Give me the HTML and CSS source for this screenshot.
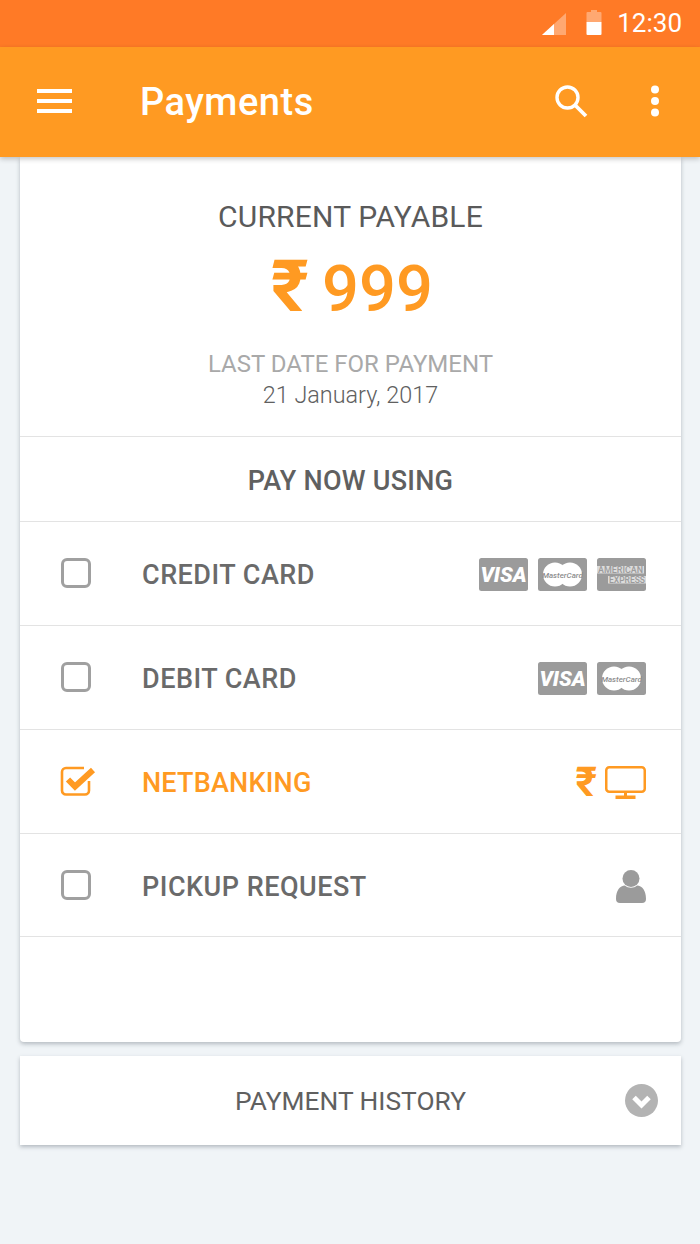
FILE: index.html
```html
<!DOCTYPE html>
<html lang="en">
<head>
<meta charset="utf-8">
<title>Payments</title>
<link rel="stylesheet" href="styles.css">
</head>
<body>
<div class="status">
  <svg class="signal" width="24" height="22" viewBox="0 0 24 22"><path d="M24 0V22H0Z" fill="#fff" fill-opacity=".35"/><path d="M12 11V22H0Z" fill="#fff"/></svg>
  <svg class="battery" width="16" height="25" viewBox="0 0 16 25"><path d="M5 0h6v2h3.500a1 1 0 0 1 1 1v9H.5V3a1 1 0 0 1 1-1H5Z" fill="#fff" fill-opacity=".35"/><path d="M.5 12h15v12a1 1 0 0 1-1 1H1.500a1 1 0 0 1-1-1Z" fill="#fff"/></svg>
  <span class="clock">12:30</span>
</div>
<header class="appbar">
  <svg class="menu" width="35" height="24" viewBox="0 0 35 24"><path d="M0 0h35v4H0ZM0 10h35v4H0ZM0 20h35v4H0Z" fill="#fff"/></svg>
  <h1 class="title">Payments</h1>
  <svg class="search" width="34" height="34" viewBox="0 0 34 34"><circle cx="13.500" cy="13.500" r="10.500" fill="none" stroke="#fff" stroke-width="3.400"/><path d="M21 21 32 32" stroke="#fff" stroke-width="3.800" fill="none"/></svg>
  <svg class="more" width="10" height="32" viewBox="0 0 10 32"><circle cx="5" cy="4.500" r="4" fill="#fff"/><circle cx="5" cy="16" r="4" fill="#fff"/><circle cx="5" cy="27.500" r="4" fill="#fff"/></svg>
</header>
<main class="content">
  <section class="card main-card">
    <div class="summary">
      <div class="payable-label">CURRENT PAYABLE</div>
      <div class="amount"><span class="rupee">₹</span> 999</div>
      <div class="due-label">LAST DATE FOR PAYMENT</div>
      <div class="due-date">21 January, 2017</div>
    </div>
    <div class="pay-head">PAY NOW USING</div>
    <div class="row">
      <span class="check"></span>
      <span class="label">CREDIT CARD</span>
      <span class="logos">
        <svg class="logo" width="49" height="33" viewBox="0 0 49 33"><rect width="49" height="33" rx="2.500" fill="#9b9b9b"/><text x="24.500" y="24" text-anchor="middle" class="t-visa">VISA</text></svg>
        <svg class="logo" width="49" height="33" viewBox="0 0 49 33"><rect width="49" height="33" rx="2.500" fill="#9b9b9b"/><circle cx="17" cy="16.500" r="12" fill="#fff"/><circle cx="32" cy="16.500" r="12" fill="#fff"/><text x="24.500" y="19.500" text-anchor="middle" class="t-mc">MasterCard</text></svg>
        <svg class="logo" width="49" height="33" viewBox="0 0 49 33"><rect width="49" height="33" rx="2.500" fill="#9b9b9b"/><path d="M0 8h47v7.500H0ZM11 18h38v7.500H11Z" fill="#dcdcdc"/><text x="23.500" y="15" text-anchor="middle" textLength="45" lengthAdjust="spacingAndGlyphs" class="t-amex">AMERICAN</text><text x="30" y="25" text-anchor="middle" textLength="36" lengthAdjust="spacingAndGlyphs" class="t-amex">EXPRESS</text></svg>
      </span>
    </div>
    <div class="row">
      <span class="check"></span>
      <span class="label">DEBIT CARD</span>
      <span class="logos">
        <svg class="logo" width="49" height="33" viewBox="0 0 49 33"><rect width="49" height="33" rx="2.500" fill="#9b9b9b"/><text x="24.500" y="24" text-anchor="middle" class="t-visa">VISA</text></svg>
        <svg class="logo" width="49" height="33" viewBox="0 0 49 33"><rect width="49" height="33" rx="2.500" fill="#9b9b9b"/><circle cx="17" cy="16.500" r="12" fill="#fff"/><circle cx="32" cy="16.500" r="12" fill="#fff"/><text x="24.500" y="19.500" text-anchor="middle" class="t-mc">MasterCard</text></svg>
      </span>
    </div>
    <div class="row row-active">
      <svg class="tick" width="36" height="30" viewBox="0 0 36 30"><path d="M29 15V24.500a4 4 0 0 1-4 4H6a4 4 0 0 1-4-4V6a4 4 0 0 1 4-4h18" fill="none" stroke="#ff9a22" stroke-width="2.600"/><path d="M8 13.500 15 20.500 33 4" fill="none" stroke="#ff9a22" stroke-width="6"/></svg>
      <span class="label">NETBANKING</span>
      <span class="logos logos-net">
        <span class="net-rupee">₹</span>
        <svg width="41" height="33" viewBox="0 0 41 33"><rect x="1.250" y="1.250" width="38.500" height="24.500" rx="3" fill="none" stroke="#ff9a22" stroke-width="2.500"/><path d="M19 26h3v4h-3ZM10.500 29.500h20V33h-20Z" fill="#ff9a22"/></svg>
      </span>
    </div>
    <div class="row row-last">
      <span class="check"></span>
      <span class="label">PICKUP REQUEST</span>
      <span class="logos">
        <svg width="30" height="33" viewBox="0 0 30 33"><circle cx="15" cy="8.500" r="8.500" fill="#9b9b9b"/><path d="M0 29c0-9 4-13 9-13.500 3 3 9 3 12 0C26 16 30 20 30 29a4 4 0 0 1-4 4H4a4 4 0 0 1-4-4Z" fill="#9b9b9b"/></svg>
      </span>
    </div>
  </section>
  <section class="card history">
    <span class="history-label">PAYMENT HISTORY</span>
    <svg class="chevron" width="33" height="33" viewBox="0 0 33 33"><circle cx="16.500" cy="16.500" r="16.500" fill="#b3b3b3"/><path d="M9 13.500 16.500 21 24 13.500" fill="none" stroke="#fff" stroke-width="5"/></svg>
  </section>
</main>
</body>
</html>
```
FILE: styles.css
```css
* { box-sizing: border-box; }
html, body { margin: 0; padding: 0; }
body {
  width: 700px;
  height: 1244px;
  overflow: hidden;
  background: #f0f4f7;
  font-family: Roboto, "Noto Sans", sans-serif;
  color: #606060;
}
.status {
  height: 47px;
  background: #ff7a26;
  display: flex;
  align-items: center;
  justify-content: flex-end;
  padding-right: 18px;
}
.signal { margin-right: 20px; margin-top: 1px; }
.battery { margin-right: 15px; margin-bottom: 2px; }
.clock { color: #fff; font-size: 26px; line-height: 47px; }
.appbar {
  position: relative;
  z-index: 2;
  height: 110px;
  background: #ff9a22;
  display: flex;
  align-items: center;
  padding-left: 37px;
  box-shadow: 0 2px 5px rgba(0, 0, 0, .22);
}
.menu { margin-bottom: 3px; }
.title {
  margin: 0 0 0 68px;
  flex: 1;
  color: #fff;
  font-size: 38px;
  font-weight: 500;
  line-height: 108px;
  letter-spacing: .5px;
}
.search { margin-right: 62px; margin-bottom: 2px; }
.more { margin-right: 40px; margin-bottom: 2px; }
.content { padding: 0 19px 0 20px; }
.card {
  background: #fff;
  box-shadow: 0 2px 4px rgba(90, 100, 110, .4);
}
.main-card {
  height: 885px;
  border-radius: 0 0 4px 4px;
}
.summary {
  height: 280px;
  border-bottom: 1px solid #e3e3e3;
  text-align: center;
  padding-top: 42px;
}
.payable-label {
  font-size: 30px;
  line-height: 36px;
  letter-spacing: .2px;
  color: #5a5a5a;
}
.amount {
  font-size: 65px;
  font-weight: 500;
  line-height: 72px;
  color: #ff9a22;
  margin-top: 18px;
  padding-left: 3px;
  word-spacing: -3px;
}
.rupee { font-size: 72px; font-weight: 700; line-height: 60px; }
.due-label {
  font-size: 24px;
  line-height: 30px;
  color: #a9a9a9;
  margin-top: 24px;
}
.due-date {
  font-size: 23.400px;
  font-weight: 300;
  line-height: 30px;
  color: #606060;
  margin-top: 1px;
}
.pay-head {
  height: 85px;
  line-height: 88px;
  border-bottom: 1px solid #e3e3e3;
  text-align: center;
  font-size: 27px;
  font-weight: 500;
  letter-spacing: .25px;
  color: #606060;
}
.row {
  height: 104px;
  border-bottom: 1px solid #e3e3e3;
  display: flex;
  align-items: center;
  padding: 0 35px 0 41px;
  font-size: 27px;
}
.row-last { height: 103px; }
.check {
  width: 30px;
  height: 30px;
  border: 3px solid #a0a0a0;
  border-radius: 6px;
  margin-right: 51px;
  margin-top: -1px;
}
.tick { margin-right: 46px; margin-left: -1px; margin-bottom: 2px; }
.label {
  flex: 1;
  font-weight: 500;
  color: #6a6a6a;
  letter-spacing: .5px;
  margin-top: 3px;
}
.row-active .label { color: #ff9a22; letter-spacing: .2px; }
.logos { display: flex; align-items: center; gap: 10px; margin-top: 2px; }
.logos-net { gap: 8px; margin-top: 1px; }
.net-rupee { font-size: 41px; font-weight: 700; line-height: 33px; color: #ff9a22; }
.t-visa { font: italic 900 21px Roboto, sans-serif; fill: #fff; }
.t-mc { font: italic 500 8px Roboto, sans-serif; fill: #8d8d8d; }
.t-amex { font: 500 9px Roboto, sans-serif; fill: #9b9b9b; }
.history {
  height: 89px;
  margin-top: 14px;
  display: flex;
  align-items: center;
  justify-content: center;
  position: relative;
}
.history-label { font-size: 26.300px; color: #606060; }
.chevron { position: absolute; right: 23px; top: 28px; }
```
